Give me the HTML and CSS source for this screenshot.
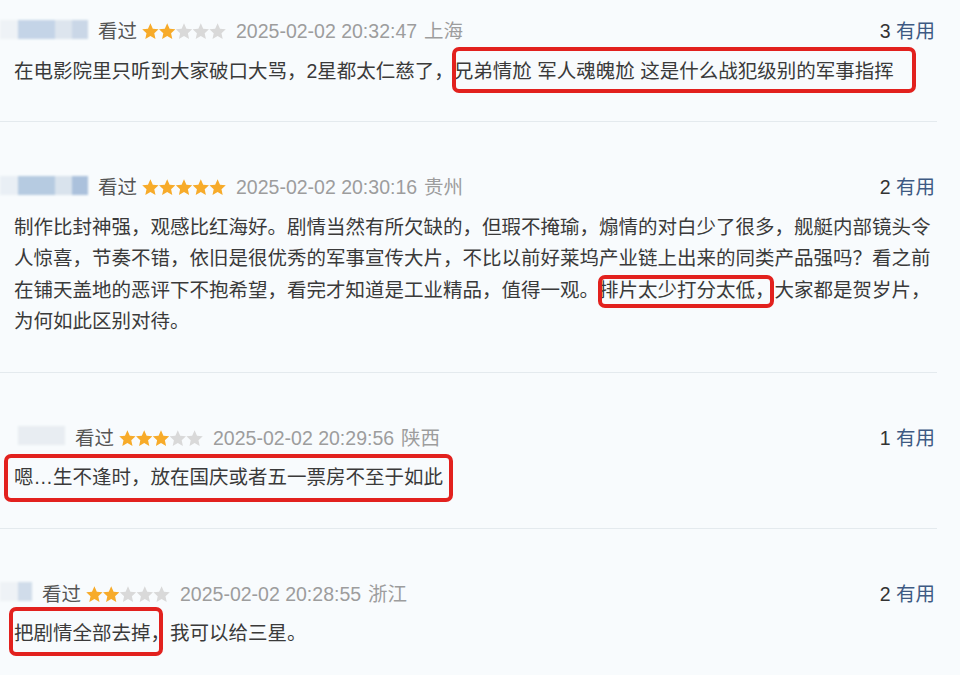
FILE: index.html
```html
<!DOCTYPE html>
<html>

<head>
    <meta charset="utf-8">
    <meta name="viewport" content="width=device-width, initial-scale=1.0" />
    <title>短评</title>
    <link rel="stylesheet" href="styles.css">
</head>

<body>
    <!-- star shape used by every rating -->
    <svg class="defs" width="0" height="0">
        <symbol id="star" viewBox="0 0 16 16">
            <path d="M8 0.2 L10.3 5.3 L15.8 5.9 L11.7 9.6 L12.85 15.1 L8 12.3 L3.15 15.1 L4.3 9.6 L0.2 5.9 L5.7 5.3 Z" />
        </symbol>
    </svg>

    <div class="comments">
        <!-- COMMENT 1 -->
        <div class="comment">
            <div class="comment-info">
                <span class="user">
                    <i class="blur" style="width:18px;background:#eef2f6"></i>
                    <i class="blur" style="width:37px;background:#c4d4e7"></i>
                    <i class="blur" style="width:17px;background:#dde5ee"></i>
                    <i class="blur" style="width:16px;background:#cad7e7"></i>
                </span>
                <span class="watched">看过</span>
                <svg class="stars" viewBox="0 0 80 16">
                    <use href="#star" x="0" width="16" height="16" class="on" />
                    <use href="#star" x="16" width="16" height="16" class="on" />
                    <use href="#star" x="32" width="16" height="16" />
                    <use href="#star" x="48" width="16" height="16" />
                    <use href="#star" x="64" width="16" height="16" />
                </svg>
                <span class="time">2025-02-02 20:32:47</span>
                <span class="location">上海</span>
                <span class="votes"><span class="vote-count">3</span> <a class="vote-btn">有用</a></span>
            </div>
            <p class="short">在电影院里只听到大家破口大骂，2星都太仁慈了，<span class="mark mark-1">兄弟情尬 军人魂魄尬 这是什么战犯级别的军事指挥</span></p>
        </div>

        <!-- COMMENT 2 -->
        <div class="comment">
            <div class="comment-info">
                <span class="user">
                    <i class="blur" style="width:18px;background:#e9eff5"></i>
                    <i class="blur" style="width:37px;background:#b6cbe1"></i>
                    <i class="blur" style="width:17px;background:#d9e3ed"></i>
                    <i class="blur" style="width:16px;background:#abc1dc"></i>
                </span>
                <span class="watched">看过</span>
                <svg class="stars" viewBox="0 0 80 16">
                    <use href="#star" x="0" width="16" height="16" class="on" />
                    <use href="#star" x="16" width="16" height="16" class="on" />
                    <use href="#star" x="32" width="16" height="16" class="on" />
                    <use href="#star" x="48" width="16" height="16" class="on" />
                    <use href="#star" x="64" width="16" height="16" class="on" />
                </svg>
                <span class="time">2025-02-02 20:30:16</span>
                <span class="location">贵州</span>
                <span class="votes"><span class="vote-count">2</span> <a class="vote-btn">有用</a></span>
            </div>
            <p class="short">制作比封神强，观感比红海好。剧情当然有所欠缺的，但瑕不掩瑜，煽情的对白少了很多，舰艇内部镜头令人惊喜，节奏不错，依旧是很优秀的军事宣传大片，不比以前好莱坞产业链上出来的同类产品强吗？看之前在铺天盖地的恶评下不抱希望，看完才知道是工业精品，值得一观。<span class="mark mark-2">排片太少打分太低，</span>大家都是贺岁片，为何如此区别对待。</p>
        </div>

        <!-- COMMENT 3 -->
        <div class="comment">
            <div class="comment-info">
                <span class="user">
                    <i class="blur" style="width:18px;background:transparent"></i>
                    <i class="blur" style="width:47px;background:#e8edf2"></i>
                </span>
                <span class="watched">看过</span>
                <svg class="stars" viewBox="0 0 80 16">
                    <use href="#star" x="0" width="16" height="16" class="on" />
                    <use href="#star" x="16" width="16" height="16" class="on" />
                    <use href="#star" x="32" width="16" height="16" class="on" />
                    <use href="#star" x="48" width="16" height="16" />
                    <use href="#star" x="64" width="16" height="16" />
                </svg>
                <span class="time">2025-02-02 20:29:56</span>
                <span class="location">陕西</span>
                <span class="votes"><span class="vote-count">1</span> <a class="vote-btn">有用</a></span>
            </div>
            <p class="short"><span class="mark mark-3">嗯…生不逢时，放在国庆或者五一票房不至于如此</span></p>
        </div>

        <!-- COMMENT 4 -->
        <div class="comment">
            <div class="comment-info">
                <span class="user">
                    <i class="blur" style="width:18px;background:#eef2f6"></i>
                    <i class="blur" style="width:14px;background:#d0dcea"></i>
                </span>
                <span class="watched">看过</span>
                <svg class="stars" viewBox="0 0 80 16">
                    <use href="#star" x="0" width="16" height="16" class="on" />
                    <use href="#star" x="16" width="16" height="16" class="on" />
                    <use href="#star" x="32" width="16" height="16" />
                    <use href="#star" x="48" width="16" height="16" />
                    <use href="#star" x="64" width="16" height="16" />
                </svg>
                <span class="time">2025-02-02 20:28:55</span>
                <span class="location">浙江</span>
                <span class="votes"><span class="vote-count">2</span> <a class="vote-btn">有用</a></span>
            </div>
            <p class="short"><span class="mark mark-4">把剧情全部去掉，</span>我可以给三星。</p>
        </div>
    </div>
</body>

</html>
```

FILE: styles.css
```css
body {
    margin: 0;
    background-color: #f8fbfd;
    font-family: "Liberation Sans", "Noto Sans CJK SC", sans-serif;
    font-size: 19.5px;
    color: #3a3a3a;
}

.defs {
    position: absolute;
}

.comments {
    width: 937px;
}

.comment {
    padding: 50px 2px 34px 14px;
    border-bottom: 1px solid #e4eaee;
}

.comment:first-child {
    padding-top: 16px;
}

.comment-info {
    display: flex;
    align-items: center;
    height: 31.5px;
    line-height: 31.5px;
    white-space: nowrap;
}

/* blurred user name */
.user {
    display: flex;
    height: 19px;
    margin-left: -14px;
    margin-right: 10px;
    margin-bottom: 5px;
    filter: blur(1.2px);
}

.blur {
    display: block;
    height: 100%;
}

.watched {
    color: #555;
    margin-right: 5px;
}

.stars {
    flex: none;
    width: 84px;
    height: 17px;
    margin-right: 10px;
    fill: #d9d9d9;
}

.stars .on {
    fill: #f7ab2a;
}

.time {
    color: #9d9d9d;
    margin-right: 7px;
}

.location {
    color: #9d9d9d;
}

.votes {
    margin-left: auto;
    color: #333;
}

.vote-btn {
    color: #3e5a83;
}

.short {
    margin: 8px 0 0;
    line-height: 31.5px;
}

/* red annotation boxes */
.mark {
    display: inline-block;
    position: relative;
}

.mark::after {
    content: "";
    position: absolute;
    border: 4px solid #e2211e;
    border-radius: 7px;
}

.mark-1::after {
    top: -9px;
    bottom: -6px;
    left: -2px;
    right: -22px;
}

.mark-2::after {
    top: 0;
    bottom: -2px;
    left: -1px;
    right: 1px;
}

.mark-3::after {
    top: -8px;
    bottom: -8px;
    left: -10px;
    right: -10px;
}

.mark-4::after {
    top: -11px;
    bottom: -6px;
    left: -5px;
    right: 7px;
}
```
